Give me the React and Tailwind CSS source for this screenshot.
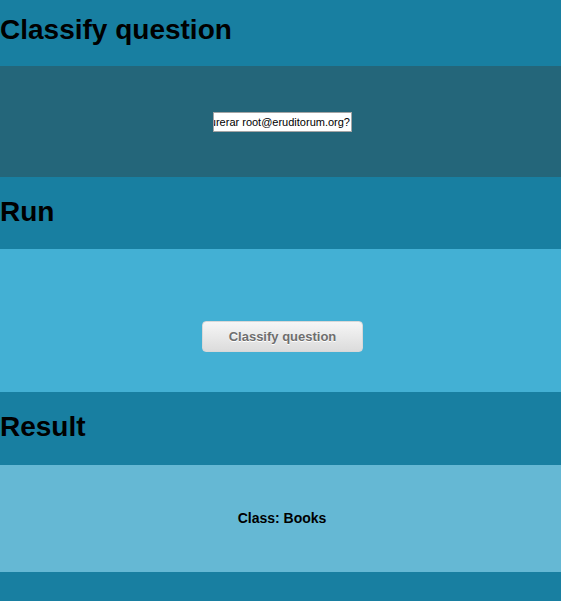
export default function App() {
  const font = { fontFamily: '"Liberation Sans", Arial, sans-serif' };
  return (
    <div className="w-full h-[601px] bg-[#187fa1] overflow-hidden" style={font}>
      <div className="h-[66px] pt-[14px]">
        <h1 className="text-[28px] leading-[32px] font-bold text-black">Classify question</h1>
      </div>
      <div className="h-[111px] bg-[#24667a] flex items-center justify-center pl-[4px]">
        <div className="w-[139px] h-[20px] bg-white border border-[#a4a4a4] flex items-center justify-end overflow-hidden pr-[1px]">
          <span className="whitespace-nowrap text-[11px] leading-[14px] text-black">¿Quién es el adminurerar root@eruditorum.org?</span>
        </div>
      </div>
      <div className="h-[72px] pt-[19px]">
        <h2 className="text-[28px] leading-[32px] font-bold text-black">Run</h2>
      </div>
      <div className="h-[143px] bg-[#43b0d4] flex justify-center pt-[72px] pl-[4px]">
        <button className="w-[161px] h-[31px] rounded-[4px] border border-[#d8d8d8] bg-gradient-to-b from-[#f6f6f6] to-[#dcdcdc] text-[13px] font-bold text-[#6e6e6e] [text-shadow:0_1px_0_#ffffff]">
          Classify question
        </button>
      </div>
      <div className="h-[73px] pt-[19px]">
        <h2 className="text-[28px] leading-[32px] font-bold text-black">Result</h2>
      </div>
      <div className="h-[107px] bg-[#65b8d4] flex items-center justify-center pl-[3px]">
        <span className="text-[14px] font-bold text-black">Class: Books</span>
      </div>
    </div>
  );
}
